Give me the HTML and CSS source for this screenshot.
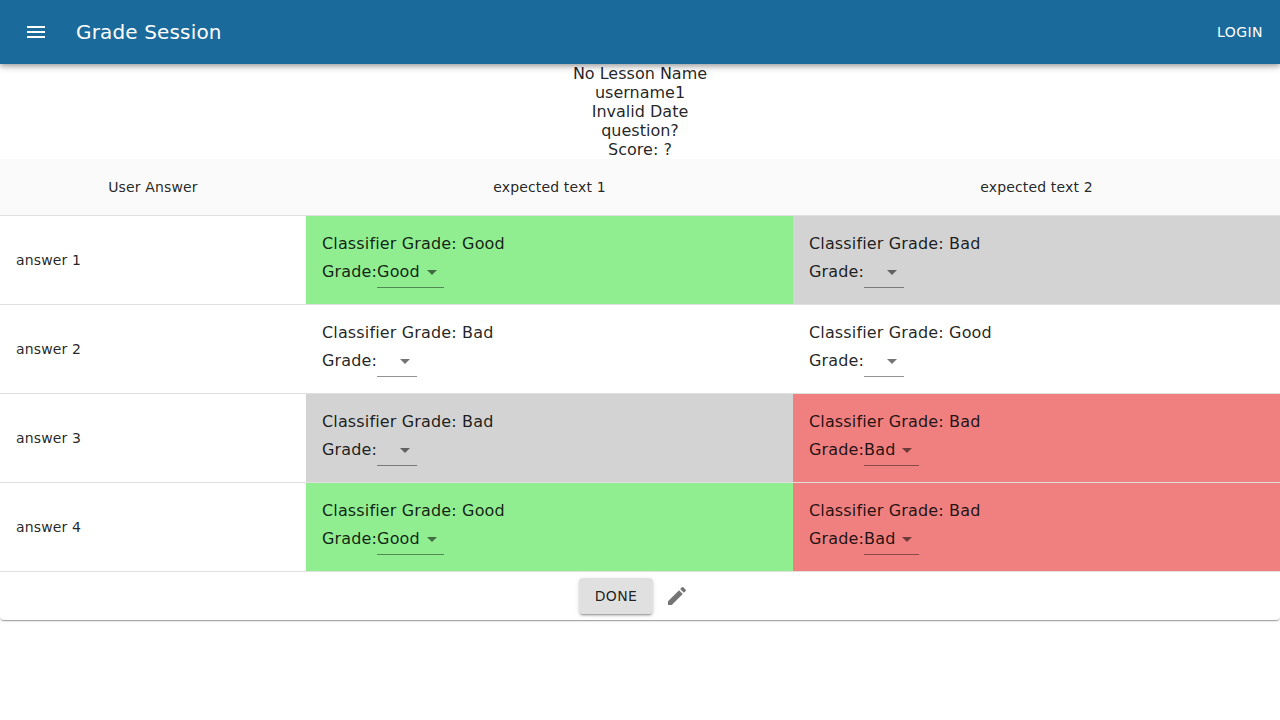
FILE: index.html
```html
<!DOCTYPE html>
<html lang="en">
<head>
<meta charset="utf-8">
<title>Grade Session</title>
<link rel="stylesheet" href="styles.css">
</head>
<body>
<header class="app-bar">
  <button class="icon-button menu-button" aria-label="Menu"><svg class="icon" viewBox="0 0 24 24"><path d="M3 18h18v-2H3v2zm0-5h18v-2H3v2zm0-7v2h18V6H3z"/></svg></button>
  <h1 class="title">Grade Session</h1>
  <button class="login">LOGIN</button>
</header>
<main class="paper">
  <section class="summary">
    <div>No Lesson Name</div>
    <div>username1</div>
    <div>Invalid Date</div>
    <div>question?</div>
    <div>Score: ?</div>
  </section>
  <table class="grades">
    <colgroup><col class="col-answer"><col class="col-grade"><col class="col-grade"></colgroup>
    <thead><tr><th>User Answer</th><th>expected text 1</th><th>expected text 2</th></tr></thead>
    <tbody>
      <tr>
        <td class="answer">answer 1</td>
        <td class="cell good"><div class="classifier">Classifier Grade: Good</div><div class="grade">Grade:<span class="select">Good<svg class="arrow" viewBox="0 0 24 24"><path d="M7 10l5 5 5-5z"/></svg></span></div></td>
        <td class="cell unset"><div class="classifier">Classifier Grade: Bad</div><div class="grade">Grade:<span class="select"><svg class="arrow" viewBox="0 0 24 24"><path d="M7 10l5 5 5-5z"/></svg></span></div></td>
      </tr>
      <tr>
        <td class="answer">answer 2</td>
        <td class="cell"><div class="classifier">Classifier Grade: Bad</div><div class="grade">Grade:<span class="select"><svg class="arrow" viewBox="0 0 24 24"><path d="M7 10l5 5 5-5z"/></svg></span></div></td>
        <td class="cell"><div class="classifier">Classifier Grade: Good</div><div class="grade">Grade:<span class="select"><svg class="arrow" viewBox="0 0 24 24"><path d="M7 10l5 5 5-5z"/></svg></span></div></td>
      </tr>
      <tr>
        <td class="answer">answer 3</td>
        <td class="cell unset"><div class="classifier">Classifier Grade: Bad</div><div class="grade">Grade:<span class="select"><svg class="arrow" viewBox="0 0 24 24"><path d="M7 10l5 5 5-5z"/></svg></span></div></td>
        <td class="cell bad"><div class="classifier">Classifier Grade: Bad</div><div class="grade">Grade:<span class="select">Bad<svg class="arrow" viewBox="0 0 24 24"><path d="M7 10l5 5 5-5z"/></svg></span></div></td>
      </tr>
      <tr>
        <td class="answer">answer 4</td>
        <td class="cell good"><div class="classifier">Classifier Grade: Good</div><div class="grade">Grade:<span class="select">Good<svg class="arrow" viewBox="0 0 24 24"><path d="M7 10l5 5 5-5z"/></svg></span></div></td>
        <td class="cell bad"><div class="classifier">Classifier Grade: Bad</div><div class="grade">Grade:<span class="select">Bad<svg class="arrow" viewBox="0 0 24 24"><path d="M7 10l5 5 5-5z"/></svg></span></div></td>
      </tr>
    </tbody>
  </table>
  <footer class="actions">
    <button class="done">DONE</button>
    <button class="icon-button edit" aria-label="Edit"><svg class="icon" viewBox="0 0 24 24"><path d="M3 17.25V21h3.75L17.81 9.94l-3.75-3.75L3 17.25zM20.71 7.04c.39-.39.39-1.02 0-1.41l-2.34-2.34a.9959.9959 0 0 0-1.41 0l-1.83 1.83 3.75 3.75 1.83-1.83z"/></svg></button>
  </footer>
</main>
</body>
</html>
```
FILE: styles.css
```css
* { box-sizing: border-box; }
body {
  min-height: 100vh;
  margin: 0;
  background: #fff;
  color: rgba(0, 0, 0, 0.87);
  font: 16px/19px "DejaVu Sans", sans-serif;
}
button {
  border: 0;
  background: none;
  color: inherit;
  font: 500 14px/24.5px "DejaVu Sans", sans-serif;
  letter-spacing: 0.02857em;
}
.app-bar {
  position: relative;
  display: flex;
  align-items: center;
  height: 64px;
  padding: 0 8px 0 12px;
  background: #1b6a9c;
  color: #fff;
  box-shadow: 0 2px 4px -1px rgba(0,0,0,.2), 0 4px 5px 0 rgba(0,0,0,.14), 0 1px 10px 0 rgba(0,0,0,.12);
}
.icon { display: block; width: 24px; height: 24px; fill: currentColor; }
.icon-button { width: 48px; height: 48px; padding: 12px; }
.title {
  flex: 1;
  margin: 0 0 0 16px;
  font-size: 20px;
  font-weight: 500;
  line-height: 32px;
  letter-spacing: 0.0075em;
}
.login { min-width: 64px; padding: 6px 8px; }
.paper {
  background: #fff;
  border-radius: 4px;
  box-shadow: 0 2px 1px -1px rgba(0,0,0,.2), 0 1px 1px 0 rgba(0,0,0,.14), 0 1px 3px 0 rgba(0,0,0,.12);
}
.summary { text-align: center; }
.grades {
  width: 100%;
  table-layout: fixed;
  border-collapse: separate;
  border-spacing: 0;
}
.col-answer { width: 306px; }
.col-grade { width: 487px; }
.grades th {
  height: 57px;
  padding: 0 16px;
  background: #fafafa;
  border-bottom: 1px solid #e0e0e0;
  font-size: 14px;
  font-weight: 500;
  line-height: 24px;
  letter-spacing: 0.01071em;
}
.grades td {
  height: 89px;
  padding: 16px;
  border-bottom: 1px solid #e0e0e0;
}
.grades .answer { font-size: 14px; line-height: 20px; letter-spacing: 0.01071em; }
.cell { letter-spacing: 0.00938em; }
.classifier { height: 24px; line-height: 24px; }
.grade { display: flex; height: 32px; line-height: 32px; }
.select {
  display: flex;
  align-items: flex-start;
  min-width: 40px;
  height: 32px;
  border-bottom: 1px solid rgba(0, 0, 0, 0.42);
}
.arrow {
  width: 24px;
  height: 24px;
  margin: 4px 0 0 auto;
  fill: rgba(0, 0, 0, 0.54);
}
.good { background: lightgreen; }
.unset { background: lightgray; }
.bad { background: lightcoral; }
.actions { display: flex; justify-content: center; align-items: center; height: 48px; }
.done {
  width: 74px;
  height: 36px;
  padding: 6px 0;
  border-radius: 4px;
  background: #e0e0e0;
  box-shadow: 0 3px 1px -2px rgba(0,0,0,.2), 0 2px 2px 0 rgba(0,0,0,.14), 0 1px 5px 0 rgba(0,0,0,.12);
}
.edit { color: rgba(0, 0, 0, 0.54); }
```
